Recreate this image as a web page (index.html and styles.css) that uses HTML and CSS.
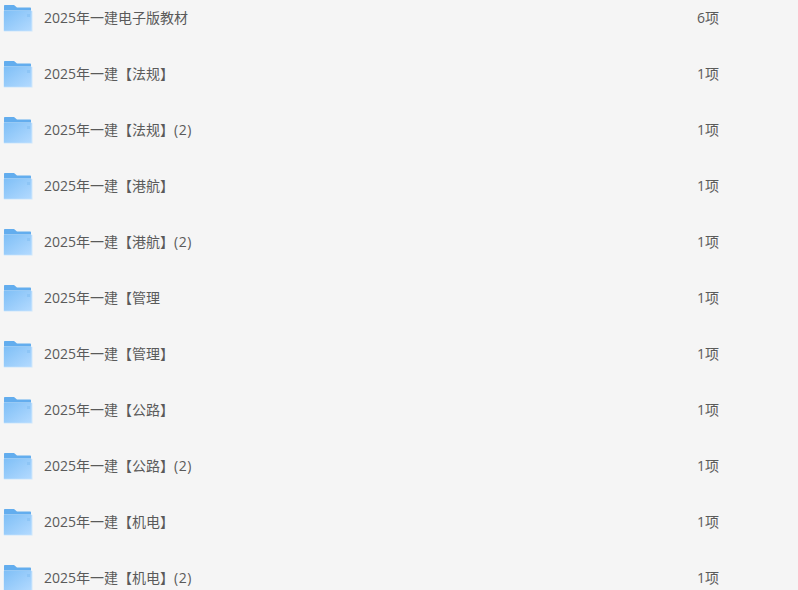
FILE: index.html
```html
<!DOCTYPE html>
<html lang="zh-CN">
<head>
    <meta charset="UTF-8">
    <title>2025年一建</title>
    <link rel="stylesheet" href="styles.css">
</head>
<body>
    <svg class="defs" width="0" height="0">
        <defs>
            <linearGradient id="front" x1="0" y1="0" x2="1" y2="1">
                <stop offset="0" stop-color="#7fbff6"/>
                <stop offset="1" stop-color="#b3daff"/>
            </linearGradient>
            <symbol id="folder" viewBox="0 0 30 28">
                <path d="M1 2C1 1.4 1.4 1 2 1H11L14 3.500H27C27.600 3.500 28 3.900 28 4.500V10H1Z" fill="#63adee"/>
                <path d="M1 6.500H28.500C29 6.500 29.500 7 29.500 7.500V27.500H1.500C1 27.500 .5 27 .5 26.500V7.500Z" fill="#cfe7fc"/>
                <path d="M1 7H28.500V26.800H1.600C1.200 26.800 1 26.500 1 26.200Z" fill="url(#front)"/>
                <path d="M24 10H27V13H24Z" fill="#8dc5f6"/>
            </symbol>
        </defs>
    </svg>
    <ul class="file-list">
        <li class="file-row">
            <svg class="folder-icon"><use href="#folder"/></svg>
            <span class="file-name">2025年一建电子版教材</span>
            <span class="file-count">6项</span>
        </li>
        <li class="file-row">
            <svg class="folder-icon"><use href="#folder"/></svg>
            <span class="file-name">2025年一建【法规】</span>
            <span class="file-count">1项</span>
        </li>
        <li class="file-row">
            <svg class="folder-icon"><use href="#folder"/></svg>
            <span class="file-name">2025年一建【法规】<span class="copy-no">(2)</span></span>
            <span class="file-count">1项</span>
        </li>
        <li class="file-row">
            <svg class="folder-icon"><use href="#folder"/></svg>
            <span class="file-name">2025年一建【港航】</span>
            <span class="file-count">1项</span>
        </li>
        <li class="file-row">
            <svg class="folder-icon"><use href="#folder"/></svg>
            <span class="file-name">2025年一建【港航】<span class="copy-no">(2)</span></span>
            <span class="file-count">1项</span>
        </li>
        <li class="file-row">
            <svg class="folder-icon"><use href="#folder"/></svg>
            <span class="file-name">2025年一建【管理</span>
            <span class="file-count">1项</span>
        </li>
        <li class="file-row">
            <svg class="folder-icon"><use href="#folder"/></svg>
            <span class="file-name">2025年一建【管理】</span>
            <span class="file-count">1项</span>
        </li>
        <li class="file-row">
            <svg class="folder-icon"><use href="#folder"/></svg>
            <span class="file-name">2025年一建【公路】</span>
            <span class="file-count">1项</span>
        </li>
        <li class="file-row">
            <svg class="folder-icon"><use href="#folder"/></svg>
            <span class="file-name">2025年一建【公路】<span class="copy-no">(2)</span></span>
            <span class="file-count">1项</span>
        </li>
        <li class="file-row">
            <svg class="folder-icon"><use href="#folder"/></svg>
            <span class="file-name">2025年一建【机电】</span>
            <span class="file-count">1项</span>
        </li>
        <li class="file-row">
            <svg class="folder-icon"><use href="#folder"/></svg>
            <span class="file-name">2025年一建【机电】<span class="copy-no">(2)</span></span>
            <span class="file-count">1项</span>
        </li>
    </ul>
</body>
</html>
```

FILE: styles.css
```css
html, body {
    height: 100%;
    overflow: hidden;
}
body {
    margin: 0;
    background: #f5f5f5;
    color: #5a5a5a;
    font-family: "Open Sans", "Noto Sans CJK SC", sans-serif;
    font-size: 14px;
}
.defs {
    display: block;
    height: 0;
}
.file-list {
    list-style: none;
    margin: -10px 0 0;
    padding: 0;
}
.file-row {
    display: flex;
    align-items: center;
    height: 56px;
    padding-left: 3px;
}
.folder-icon {
    flex: none;
    width: 30px;
    height: 28px;
    margin-right: 11px;
}
.file-name {
    width: 653px;
    flex: none;
    padding-bottom: 2px;
    white-space: nowrap;
}
.copy-no {
    letter-spacing: 0.6px;
}
.file-count {
    padding-bottom: 2px;
    white-space: nowrap;
}
```
